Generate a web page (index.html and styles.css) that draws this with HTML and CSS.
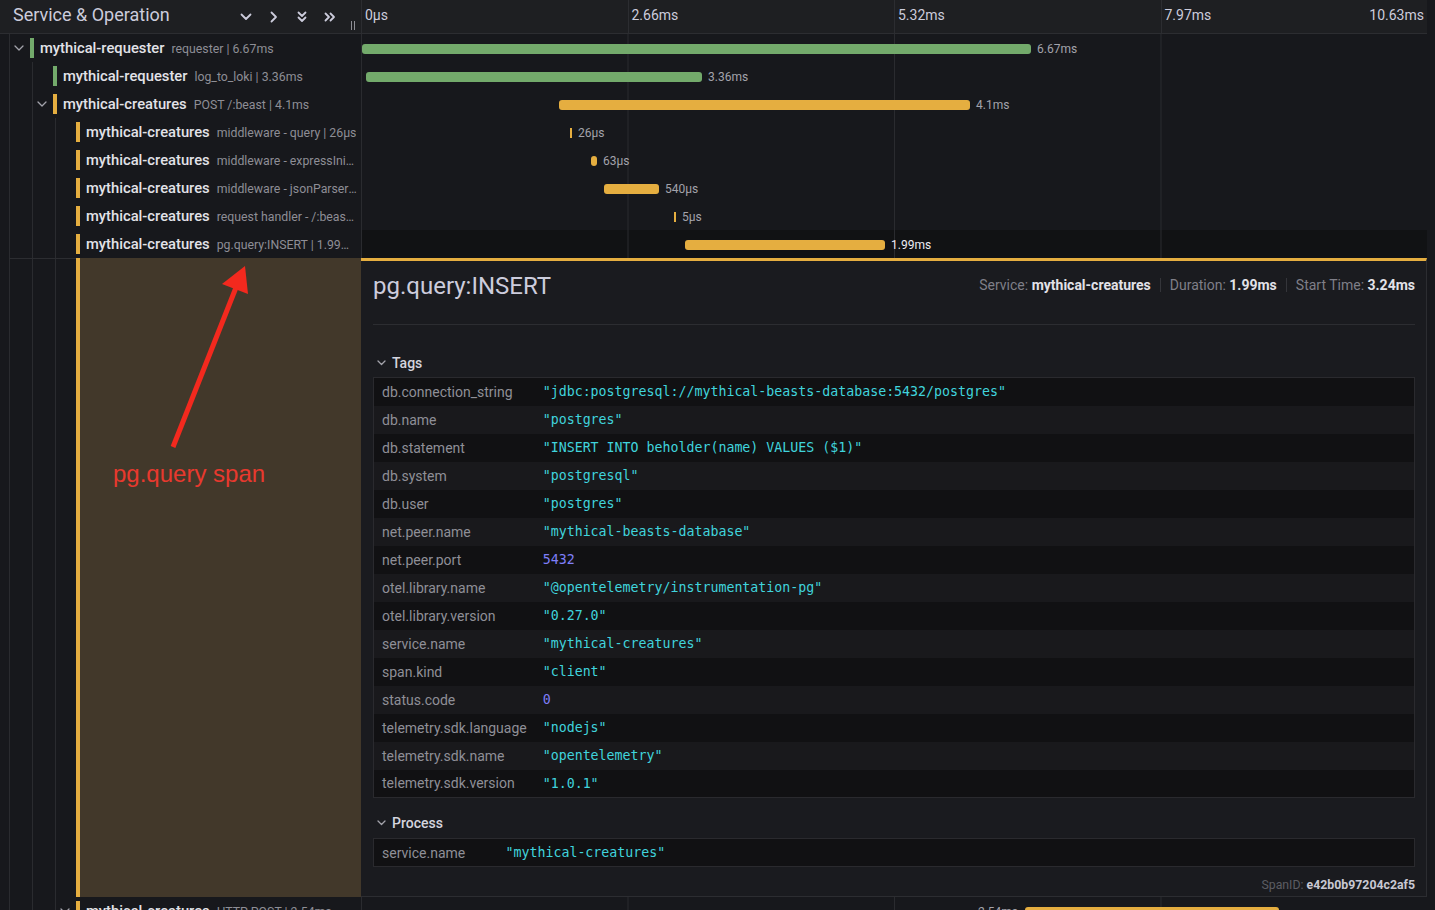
FILE: index.html
```html
<!DOCTYPE html>
<html lang="en">
<head>
<meta charset="utf-8">
<title>Trace view</title>
<link rel="stylesheet" href="styles.css">
</head>
<body>
<div class="trace">
  <div class="hdr">
    <div class="hdr-left">
      <div class="hdr-title">Service &amp; Operation</div>
      <div class="hdr-btn"><svg width="12" height="8" viewBox="0 0 12 8"><path d="M1.5 1.5 L6 6 L10.5 1.5" class="ic"/></svg></div>
      <div class="hdr-btn"><svg width="8" height="12" viewBox="0 0 8 12"><path d="M1.5 1.5 L6 6 L1.5 10.5" class="ic"/></svg></div>
      <div class="hdr-btn"><svg width="10" height="12" viewBox="0 0 10 12"><path d="M1.5 1.5 L5 5 L8.5 1.5 M1.5 6.5 L5 10 L8.5 6.5" class="ic"/></svg></div>
      <div class="hdr-btn"><svg width="12" height="10" viewBox="0 0 12 10"><path d="M1.5 1.5 L5 5 L1.5 8.5 M6.5 1.5 L10 5 L6.5 8.5" class="ic"/></svg></div>
      <div class="grip"><span></span><span></span></div>
    </div>
    <div class="hdr-time">
      <div class="tick"><span>0µs</span></div>
      <div class="tick"><span>2.66ms</span></div>
      <div class="tick"><span>5.32ms</span></div>
      <div class="tick"><span>7.97ms</span><span>10.63ms</span></div>
    </div>
  </div>

  <div class="row">
    <div class="row-left">
      <span class="slot"><svg width="10" height="6" viewBox="0 0 10 6"><path d="M1 1 L5 5 L9 1" class="tg"/></svg></span>
      <span class="cbar green"></span>
      <span class="label"><span class="svc">mythical-requester</span><span class="op">requester | 6.67ms</span></span>
    </div>
    <div class="row-tl"><div class="bar green" style="margin-left:1px;width:669px"></div><span class="blabel">6.67ms</span></div>
  </div>

  <div class="row">
    <div class="row-left">
      <span class="guide"></span><span class="slot"></span>
      <span class="cbar green"></span>
      <span class="label"><span class="svc">mythical-requester</span><span class="op">log_to_loki | 3.36ms</span></span>
    </div>
    <div class="row-tl"><div class="bar green" style="margin-left:5px;width:336px"></div><span class="blabel">3.36ms</span></div>
  </div>

  <div class="row">
    <div class="row-left">
      <span class="guide"></span><span class="slot"><svg width="10" height="6" viewBox="0 0 10 6"><path d="M1 1 L5 5 L9 1" class="tg"/></svg></span>
      <span class="cbar yellow"></span>
      <span class="label"><span class="svc">mythical-creatures</span><span class="op">POST /:beast | 4.1ms</span></span>
    </div>
    <div class="row-tl"><div class="bar yellow" style="margin-left:198px;width:411px"></div><span class="blabel">4.1ms</span></div>
  </div>

  <div class="row">
    <div class="row-left">
      <span class="guide"></span><span class="guide"></span><span class="slot"></span>
      <span class="cbar yellow"></span>
      <span class="label"><span class="svc">mythical-creatures</span><span class="op">middleware - query | 26µs</span></span>
    </div>
    <div class="row-tl"><div class="bar yellow tick-bar" style="margin-left:209px;width:2px"></div><span class="blabel">26µs</span></div>
  </div>

  <div class="row">
    <div class="row-left">
      <span class="guide"></span><span class="guide"></span><span class="slot"></span>
      <span class="cbar yellow"></span>
      <span class="label"><span class="svc">mythical-creatures</span><span class="op">middleware - expressInit | 63µs</span></span>
    </div>
    <div class="row-tl"><div class="bar yellow" style="margin-left:230px;width:6px"></div><span class="blabel">63µs</span></div>
  </div>

  <div class="row">
    <div class="row-left">
      <span class="guide"></span><span class="guide"></span><span class="slot"></span>
      <span class="cbar yellow"></span>
      <span class="label"><span class="svc">mythical-creatures</span><span class="op">middleware - jsonParser | 540µs</span></span>
    </div>
    <div class="row-tl"><div class="bar yellow" style="margin-left:243px;width:55px"></div><span class="blabel">540µs</span></div>
  </div>

  <div class="row">
    <div class="row-left">
      <span class="guide"></span><span class="guide"></span><span class="slot"></span>
      <span class="cbar yellow"></span>
      <span class="label"><span class="svc">mythical-creatures</span><span class="op">request handler - /:beast | 5µs</span></span>
    </div>
    <div class="row-tl"><div class="bar yellow tick-bar" style="margin-left:313px;width:2px"></div><span class="blabel">5µs</span></div>
  </div>

  <div class="row selected">
    <div class="row-left">
      <span class="guide"></span><span class="guide"></span><span class="slot"></span>
      <span class="cbar yellow"></span>
      <span class="label"><span class="svc">mythical-creatures</span><span class="op">pg.query:INSERT | 1.99ms</span></span>
    </div>
    <div class="row-tl"><div class="bar yellow" style="margin-left:324px;width:200px"></div><span class="blabel">1.99ms</span></div>
  </div>

  <div class="detail-row">
    <div class="detail-left">
      <div class="dguides"><span class="guide"></span><span class="guide"></span><span class="slot"></span></div>
      <div class="dsel"></div>
      <div class="dbrown"></div>
    </div>
    <div class="detail">
      <div class="detail-head">
        <h2 class="detail-title">pg.query:INSERT</h2>
        <div class="meta">
          <span class="meta-item">Service: <b>mythical-creatures</b></span>
          <span class="meta-sep"></span>
          <span class="meta-item">Duration: <b>1.99ms</b></span>
          <span class="meta-sep"></span>
          <span class="meta-item">Start Time: <b>3.24ms</b></span>
        </div>
      </div>
      <div class="divider"></div>

      <div class="acc-title tags-title"><svg width="9" height="6" viewBox="0 0 9 6"><path d="M1 1 L4.5 4.5 L8 1" class="tg"/></svg><span>Tags</span></div>
      <table class="kv tags">
        <tr><td class="k">db.connection_string</td><td class="v">"jdbc:postgresql://mythical-beasts-database:5432/postgres"</td></tr>
        <tr><td class="k">db.name</td><td class="v">"postgres"</td></tr>
        <tr><td class="k">db.statement</td><td class="v">"INSERT INTO beholder(name) VALUES ($1)"</td></tr>
        <tr><td class="k">db.system</td><td class="v">"postgresql"</td></tr>
        <tr><td class="k">db.user</td><td class="v">"postgres"</td></tr>
        <tr><td class="k">net.peer.name</td><td class="v">"mythical-beasts-database"</td></tr>
        <tr><td class="k">net.peer.port</td><td class="v num">5432</td></tr>
        <tr><td class="k">otel.library.name</td><td class="v">"@opentelemetry/instrumentation-pg"</td></tr>
        <tr><td class="k">otel.library.version</td><td class="v">"0.27.0"</td></tr>
        <tr><td class="k">service.name</td><td class="v">"mythical-creatures"</td></tr>
        <tr><td class="k">span.kind</td><td class="v">"client"</td></tr>
        <tr><td class="k">status.code</td><td class="v num">0</td></tr>
        <tr><td class="k">telemetry.sdk.language</td><td class="v">"nodejs"</td></tr>
        <tr><td class="k">telemetry.sdk.name</td><td class="v">"opentelemetry"</td></tr>
        <tr><td class="k">telemetry.sdk.version</td><td class="v">"1.0.1"</td></tr>
      </table>

      <div class="acc-title proc-title"><svg width="9" height="6" viewBox="0 0 9 6"><path d="M1 1 L4.5 4.5 L8 1" class="tg"/></svg><span>Process</span></div>
      <table class="kv proc">
        <tr><td class="k">service.name</td><td class="v">"mythical-creatures"</td></tr>
      </table>

      <div class="spanid">SpanID: <b>e42b0b97204c2af5</b></div>
    </div>
  </div>

  <div class="row">
    <div class="row-left">
      <span class="guide"></span><span class="guide"></span><span class="slot"><svg width="10" height="6" viewBox="0 0 10 6"><path d="M1 1 L5 5 L9 1" class="tg"/></svg></span>
      <span class="cbar yellow"></span>
      <span class="label"><span class="svc">mythical-creatures</span><span class="op">HTTP POST | 2.54ms</span></span>
    </div>
    <div class="row-tl"><span class="pre" style="width:664px">2.54ms</span><div class="bar yellow" style="width:254px"></div></div>
  </div>
</div>

<svg class="annot-arrow" width="1435" height="910" viewBox="0 0 1435 910">
  <line x1="173" y1="447" x2="237" y2="285" stroke="#f3291e" stroke-width="5"/>
  <polygon points="245,266 222,284 248,294" fill="#f3291e"/>
</svg>
<div class="annot-text">pg.query span</div>
</body>
</html>
```
FILE: styles.css
```css
* { box-sizing: border-box; }
html, body { margin: 0; padding: 0; }
body {
  width: 1435px;
  height: 910px;
  overflow: hidden;
  position: relative;
  background: #17181c;
  color: #ccccdc;
  font-family: Roboto, "Liberation Sans", Arial, sans-serif;
}
.trace { width: 1427px; }

/* header */
.hdr {
  display: flex;
  height: 34px;
  background: #1e1f22;
  border-bottom: 1px solid #2c2d31;
}
.hdr-left {
  width: 361px;
  flex: none;
  display: flex;
  align-items: center;
  padding-left: 13px;
}
.hdr-title { flex: 1; font-size: 18px; color: #ccccdc; padding-bottom: 4px; }
.hdr-btn {
  width: 28px;
  height: 30px;
  display: flex;
  align-items: center;
  justify-content: center;
}
.ic { fill: none; stroke: #ccccdc; stroke-width: 1.8; stroke-linecap: round; stroke-linejoin: round; }
.grip {
  width: 17px;
  align-self: stretch;
  display: flex;
  align-items: flex-end;
  padding: 0 0 3px 7px;
  gap: 2px;
}
.grip span { width: 1px; height: 9px; background: #8e8e95; }
.hdr-time { flex: 1; display: flex; }
.tick {
  flex: 1;
  border-left: 1px solid #2c2d31;
  padding: 0 3px 3px 3px;
  display: flex;
  align-items: center;
  justify-content: space-between;
  font-size: 14px;
  color: #ccccdc;
}

/* rows */
.row { display: flex; height: 28px; }
.row-left {
  width: 361px;
  flex: none;
  display: flex;
  align-items: center;
  padding: 0 4px 0 9px;
  min-width: 0;
}
.guide {
  width: 23px;
  flex: none;
  align-self: stretch;
  border-left: 1px solid #2a2b2f;
}
.slot {
  width: 21px;
  flex: none;
  align-self: stretch;
  border-left: 1px solid #2a2b2f;
  display: flex;
  align-items: center;
  justify-content: center;
  padding-right: 3px;
}
.tg { fill: none; stroke: #a3a3ab; stroke-width: 1.3; stroke-linecap: round; stroke-linejoin: round; }
.cbar { width: 4px; height: 20px; flex: none; margin-right: 6px; }
.green { background: #73aa6b; }
.yellow { background: #e5ae40; }
.label {
  min-width: 0;
  overflow: hidden;
  white-space: nowrap;
  text-overflow: ellipsis;
  color: #8e8e96;
  font-size: 12.3px;
}
.svc { font-size: 14.75px; font-weight: 500; color: #e2e2e8; }
.op { font-size: 12.3px; color: #8e8e96; margin-left: 7px; }

.row-tl {
  flex: 1;
  display: flex;
  align-items: center;
  padding-top: 1px;
  background-image: linear-gradient(to right, #2a2b2f 1px, transparent 1px);
  background-size: 25% 100%;
}
.bar { height: 10px; border-radius: 3px; flex: none; }
.tick-bar { border-radius: 0; }
.blabel { font-size: 12px; color: #a3a3ab; margin-left: 6px; white-space: nowrap; }
.pre { flex: none; text-align: right; padding-right: 7px; font-size: 12px; color: #a3a3ab; }
.selected .row-tl { background-color: #111214; }
.selected .blabel { color: #ececf2; }

/* detail */
.detail-row { display: flex; height: 639px; }
.detail-left { width: 361px; flex: none; display: flex; padding-left: 9px; }
.dguides { display: flex; border-top: 1px solid #2c2d31; }
.dsel { width: 4px; background: #e5ae40; }
.dbrown { flex: 1; background: #42382a; }
.detail {
  flex: 1;
  display: flex;
  flex-direction: column;
  background: #1a1b1f;
  border-top: 3px solid #e5ae40;
  border-right: 1px solid #2c2d31;
  border-bottom: 1px solid #2c2d31;
  padding: 0 11px 3px 12px;
}
.detail-head {
  display: flex;
  align-items: center;
  justify-content: space-between;
  padding-top: 10px;
}
.detail-title {
  margin: 0;
  font-size: 24px;
  line-height: 30px;
  font-weight: 400;
  color: #ccccdc;
}
.meta { display: flex; align-items: center; font-size: 14px; color: #7f7f88; padding-bottom: 3px; }
.meta b { color: #e2e2e8; font-weight: 700; }
.meta-sep { width: 1px; height: 14px; background: #34353a; margin: 0 9px; }
.divider { margin-top: 23px; border-top: 1px solid #2c2d31; }
.acc-title {
  display: flex;
  align-items: center;
  gap: 6px;
  height: 20px;
  padding-left: 4px;
  font-size: 14px;
  font-weight: 500;
  color: #d4d4de;
}
.tags-title { margin-top: 28px; }
.proc-title { margin-top: 15px; }
.kv {
  width: 100%;
  border-collapse: collapse;
  border: 1px solid #2a2a2e;
  margin-top: 4px;
}
.proc { margin-top: 5px; }
.kv td { height: 28px; padding: 0 8px; white-space: nowrap; }
.kv tr:nth-child(odd) { background: #111113; }
.kv tr:nth-child(even) { background: #19191c; }
.k { font-size: 14px; color: #8f8f97; }
.tags .k { width: 161px; }
.proc .k { width: 124px; }
.v {
  font-family: "DejaVu Sans Mono", "Liberation Mono", monospace;
  font-size: 13.28px;
  color: #40d4dd;
}
.v.num { color: #7f7ff8; }
.spanid {
  margin-top: auto;
  text-align: right;
  font-size: 12.3px;
  line-height: 16px;
  color: #5c5d63;
}
.spanid b { color: #c9c9d3; font-weight: 700; }

/* annotation overlay */
.annot-arrow { position: absolute; left: 0; top: 0; pointer-events: none; }
.annot-text {
  position: absolute;
  left: 113px;
  top: 460px;
  font-family: "Liberation Sans", Arial, sans-serif;
  font-size: 24px;
  line-height: 28px;
  color: #e8392e;
  pointer-events: none;
}
```
